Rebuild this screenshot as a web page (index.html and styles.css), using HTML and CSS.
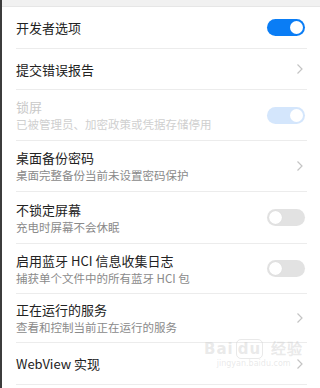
FILE: index.html
```html
<!DOCTYPE html>
<html lang="zh-CN">
<head>
<meta charset="utf-8">
<link rel="stylesheet" href="styles.css">
</head>
<body>
<div class="screen">
  <div class="topband"></div>
  <div class="list">
    <div class="row h43">
      <div class="text"><div class="title">开发者选项</div></div>
      <span class="toggle on"><span class="knob"></span></span>
    </div>
    <div class="row h41">
      <div class="text"><div class="title">提交错误报告</div></div>
      <svg class="chev" width="8" height="12" viewBox="0 0 8 12"><path d="M1.5 1.5 L6 6 L1.5 10.5" fill="none" stroke="#c4c4c4" stroke-width="1.2"/></svg>
    </div>
    <div class="row h51 disabled">
      <div class="text"><div class="title">锁屏</div><div class="sub">已被管理员、加密政策或凭据存储停用</div></div>
      <span class="toggle dis"><span class="knob"></span></span>
    </div>
    <div class="row h51">
      <div class="text"><div class="title">桌面备份密码</div><div class="sub">桌面完整备份当前未设置密码保护</div></div>
      <svg class="chev" width="8" height="12" viewBox="0 0 8 12"><path d="M1.5 1.5 L6 6 L1.5 10.5" fill="none" stroke="#c4c4c4" stroke-width="1.2"/></svg>
    </div>
    <div class="row h52">
      <div class="text"><div class="title">不锁定屏幕</div><div class="sub">充电时屏幕不会休眠</div></div>
      <span class="toggle off"><span class="knob"></span></span>
    </div>
    <div class="row h50">
      <div class="text"><div class="title">启用蓝牙 HCI 信息收集日志</div><div class="sub">捕获单个文件中的所有蓝牙 HCI 包</div></div>
      <span class="toggle off"><span class="knob"></span></span>
    </div>
    <div class="row h49">
      <div class="text"><div class="title">正在运行的服务</div><div class="sub">查看和控制当前正在运行的服务</div></div>
      <svg class="chev" width="8" height="12" viewBox="0 0 8 12"><path d="M1.5 1.5 L6 6 L1.5 10.5" fill="none" stroke="#c4c4c4" stroke-width="1.2"/></svg>
    </div>
    <div class="row h42">
      <div class="text"><div class="title">WebView 实现</div></div>
      <svg class="chev" width="8" height="12" viewBox="0 0 8 12"><path d="M1.5 1.5 L6 6 L1.5 10.5" fill="none" stroke="#c4c4c4" stroke-width="1.2"/></svg>
    </div>
  </div>
  <div class="watermark">
    <div class="wm-logo">Bai<span class="wm-du">du</span> 经验</div>
    <div class="wm-url">jingyan.baidu.com</div>
  </div>
</div>
</body>
</html>
```

FILE: styles.css
```css
* { box-sizing: border-box; margin: 0; padding: 0; }
html, body { width: 320px; height: 388px; overflow: hidden; background: #fff; }
body { font-family: "Noto Sans CJK SC", "Noto Sans", sans-serif; }
.screen {
  position: relative;
  width: 320px;
  height: 388px;
  background: #fff;
  border-left: 2px solid #3c3c3c;
}
.topband {
  height: 7px;
  background: #f1f1f1;
  border-bottom: 1px solid #e6e6e6;
}
.list { display: flex; flex-direction: column; }
.row {
  display: flex;
  align-items: center;
  margin: 0 13px 0 14px;
  border-bottom: 1px solid #ececec;
}
.h43 { height: 42px; }
.h41 { height: 41px; }
.h51 { height: 51px; }
.h52 { height: 52px; }
.h50 { height: 50px; }
.h49 { height: 49px; }
.h42 { height: 42px; }
.text { flex: 1; display: flex; flex-direction: column; }
.title { font-size: 13px; line-height: 17px; color: #222; }
.sub { font-size: 11.5px; line-height: 16px; color: #8a8a8a; margin-top: 1px; }
.disabled .title { color: #c9c9c9; }
.disabled .sub { color: #cfcfcf; }
.chev { margin-right: 3px; flex: none; }
.toggle {
  position: relative;
  flex: none;
  width: 38px;
  height: 17px;
  border-radius: 9px;
  margin-right: 2px;
}
.toggle .knob {
  position: absolute;
  top: 2px;
  width: 13px;
  height: 13px;
  border-radius: 50%;
  background: #fff;
}
.toggle.on { background: #0a7df5; }
.toggle.on .knob { right: 2px; }
.toggle.dis { background: #d4e6fc; }
.toggle.dis .knob { right: 2px; }
.toggle.off { background: #e2e2e2; }
.toggle.off .knob { left: 2px; box-shadow: 0 0 1px rgba(0,0,0,0.1); }
.watermark {
  position: absolute;
  left: 202px;
  top: 340px;
  color: rgba(200,200,200,0.4);
  text-align: center;
}
.wm-logo { font-family: "DejaVu Sans", sans-serif; font-size: 15px; font-weight: bold; line-height: 18px; letter-spacing: 1px; }
.wm-du { border: 1px solid rgba(200,200,200,0.4); border-radius: 5px; padding: 0 1px; margin: 0 2px; }
.wm-url { font-family: "DejaVu Sans", sans-serif; font-size: 8px; line-height: 12px; }
```
